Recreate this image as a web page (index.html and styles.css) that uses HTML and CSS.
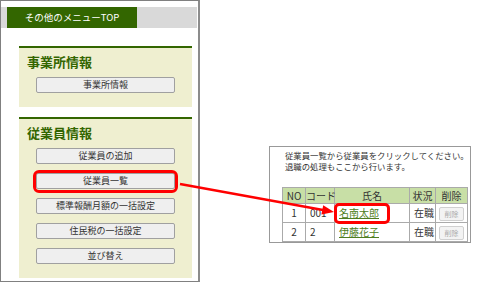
FILE: index.html
```html
<!DOCTYPE html>
<html lang="ja">
<head>
<meta charset="utf-8">
<link rel="stylesheet" href="styles.css">
</head>
<body>
<div class="page">
  <aside class="menu">
    <div class="tabbar"><div class="tab">その他のメニューTOP</div></div>
    <section class="group">
      <h2 class="group-title">事業所情報</h2>
      <div class="btns">
        <button class="btn">事業所情報</button>
      </div>
    </section>
    <section class="group group-second">
      <h2 class="group-title">従業員情報</h2>
      <div class="btns">
        <button class="btn">従業員の追加</button>
        <button class="btn btn-hl">従業員一覧</button>
        <button class="btn">標準報酬月額の一括設定</button>
        <button class="btn">住民税の一括設定</button>
        <button class="btn">並び替え</button>
      </div>
    </section>
  </aside>
  <div class="list">
    <p class="note">従業員一覧から従業員をクリックしてください。<br>退職の処理もここから行います。</p>
    <table class="emp">
      <colgroup>
        <col class="c-no"><col class="c-code"><col class="c-name"><col class="c-st"><col class="c-del">
      </colgroup>
      <thead>
        <tr><th>NO</th><th>コード</th><th>氏名</th><th>状況</th><th>削除</th></tr>
      </thead>
      <tbody>
        <tr>
          <td class="t-c">1</td><td class="t-l">001</td>
          <td class="t-l name-hl"><a class="name" href="#">名南太郎</a></td>
          <td class="t-l">在職</td><td class="t-c"><span class="del">削除</span></td>
        </tr>
        <tr>
          <td class="t-c">2</td><td class="t-l">2</td>
          <td class="t-l"><a class="name" href="#">伊藤花子</a></td>
          <td class="t-l">在職</td><td class="t-c"><span class="del">削除</span></td>
        </tr>
      </tbody>
    </table>
  </div>
  <svg class="arrow" width="482" height="286" viewBox="0 0 482 286">
    <line x1="180" y1="184" x2="323" y2="210" stroke="#f00" stroke-width="2.4"/>
    <polygon points="334,212 323.2,205.2 321.4,214.4" fill="#f00"/>
  </svg>
</div>
</body>
</html>
```

FILE: styles.css
```css
html, body {
  margin: 0;
  padding: 0;
  background: #fff;
}
body {
  font-family: "Noto Sans CJK JP", "Noto Sans", sans-serif;
  color: #333;
}
.page {
  position: relative;
  display: flex;
  align-items: flex-start;
  width: 482px;
  height: 286px;
  overflow: hidden;
}
.menu {
  box-sizing: border-box;
  width: 200px;
  height: 282px;
  border: 1px solid #808080;
  border-right: 2px solid #8c8c8c;
  padding-top: 6px;
  flex: none;
}
.tabbar {
  height: 21px;
  background: #d9d9d9;
  margin-right: 1px;
  padding-left: 6px;
}
.tab {
  width: 130px;
  height: 21px;
  background: #336600;
  color: #fff;
  font-size: 9.5px;
  line-height: 21px;
  text-align: center;
}
.group {
  width: 173px;
  margin: 18px 0 0 18px;
  border-top: 2px solid #336600;
  background: #efefd0;
  padding-bottom: 14px;
}
.group-second {
  margin-top: 10px;
}
.group-title {
  margin: 0;
  padding: 6px 0 0 8px;
  font-size: 13px;
  line-height: 16px;
  font-weight: bold;
  color: #336600;
}
.btns {
  display: flex;
  flex-direction: column;
  gap: 9px;
  padding-left: 17px;
  margin-top: 7px;
}
.btn {
  position: relative;
  box-sizing: border-box;
  width: 139px;
  height: 16px;
  padding: 0;
  border: 1px solid #a0a0a0;
  border-radius: 2px;
  background: #efefef;
  font-family: "Noto Sans CJK JP", sans-serif;
  font-size: 9px;
  line-height: 14px;
  color: #333;
}
.btn-hl::after {
  content: "";
  position: absolute;
  left: -4px;
  right: -4px;
  top: -4px;
  bottom: -5px;
  border: 3px solid #f00;
  border-radius: 6px;
}
.list {
  box-sizing: border-box;
  width: 202px;
  height: 97px;
  margin: 146px 0 0 69px;
  border: 1px solid #999;
  padding: 3px 0 0 12px;
  flex: none;
}
.note {
  margin: 0 0 16px 0;
  padding-left: 3px;
  font-size: 8.4px;
  line-height: 10.5px;
  color: #333;
  white-space: nowrap;
}
.emp {
  border-collapse: collapse;
  table-layout: fixed;
  width: 185px;
  font-size: 10px;
  color: #333;
}
.c-no { width: 23px; }
.c-code { width: 29px; }
.c-name { width: 75px; }
.c-st { width: 26px; }
.c-del { width: 32px; }
.emp th, .emp td {
  border: 1px solid #aaa;
  padding: 0;
  white-space: nowrap;
}
.emp th {
  height: 15px;
  line-height: 14px;
  background: #c8dfa6;
  font-weight: normal;
  text-align: center;
}
.emp td {
  height: 18px;
  line-height: 14px;
  background: #fff;
}
.t-c { text-align: center; }
.t-l { text-align: left; padding-left: 4px !important; }
.name {
  color: #4e7d20;
  text-decoration: underline;
}
.name-hl {
  position: relative;
}
.name-hl::after {
  content: "";
  position: absolute;
  left: -1px;
  top: -1px;
  width: 50px;
  height: 15px;
  border: 3px solid #f00;
  border-radius: 5px;
}
.del {
  display: inline-block;
  box-sizing: border-box;
  width: 25px;
  height: 14px;
  border: 1px solid #d0d0d0;
  border-radius: 2px;
  background: #f3f3f3;
  color: #aaa;
  font-size: 7px;
  line-height: 12px;
  text-align: center;
  vertical-align: middle;
}
.arrow {
  position: absolute;
  left: 0;
  top: 0;
  pointer-events: none;
}
```
